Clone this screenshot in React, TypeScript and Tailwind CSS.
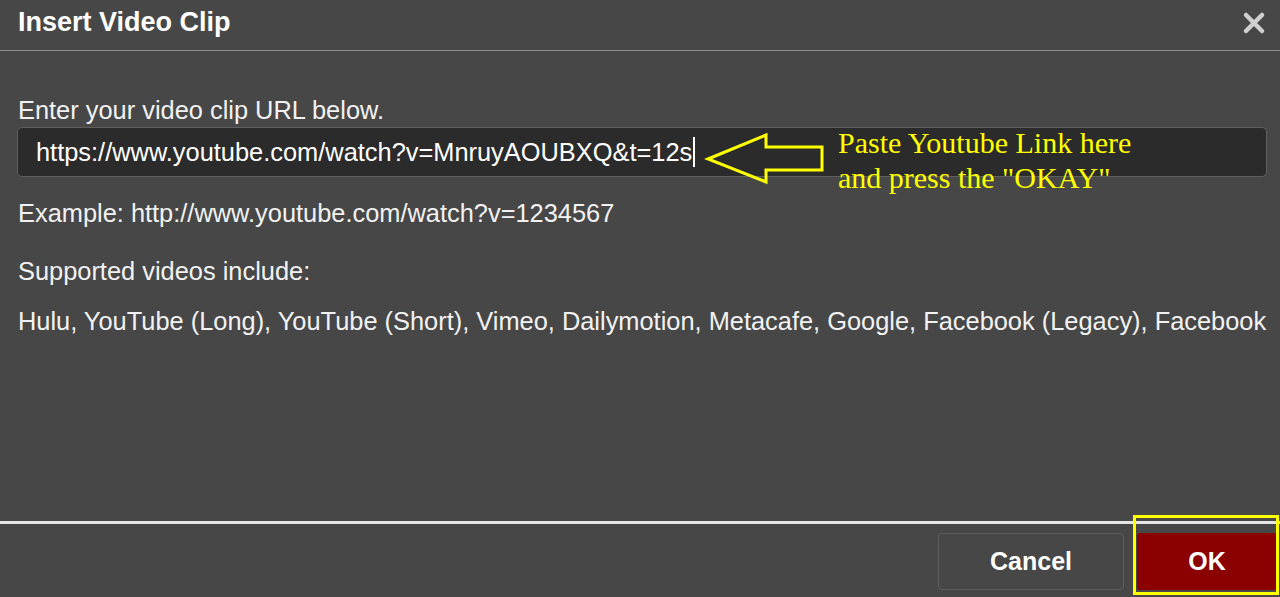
import React from 'react';

const App: React.FC = () => {
  return (
    <div className="relative w-[1280px] h-[597px] overflow-hidden bg-[#474747] text-white flex flex-col font-['Liberation_Sans',Arial,sans-serif]">
      {/* header */}
      <div className="h-[51px] shrink-0 flex items-center justify-between pl-[18px] pr-[12px] border-b border-[#8f8f8f]">
        <h1 className="text-[27px] font-bold leading-none text-white -mt-[6px]">Insert Video Clip</h1>
        <button className="w-[28px] h-[28px] flex items-center justify-center -mt-[4px]">
          <svg width="24" height="24" viewBox="0 0 24 24">
            <path d="M4 4 L20 20 M20 4 L4 20" stroke="#cfcfcf" strokeWidth="4.5" strokeLinecap="round" />
          </svg>
        </button>
      </div>

      {/* body */}
      <div className="flex-1 pl-[17px] pr-[13px] pt-[45px] text-[25.4px] leading-[28px] text-[#f2f2f2]">
        <p className="pl-[1px]">Enter your video clip URL below.</p>
        <div className="mt-[3px] h-[50px] rounded-[5px] border border-[#5f5f5f] bg-[#2b2b2b] flex items-center pl-[18px]">
          <span className="text-white">https://www.youtube.com/watch?v=MnruyAOUBXQ&amp;t=12s</span>
          <span className="ml-[1px] w-[2px] h-[30px] bg-white" />
        </div>
        <p className="mt-[22px] pl-[1px]">Example: http://www.youtube.com/watch?v=1234567</p>
        <p className="mt-[30px] pl-[1px]">Supported videos include:</p>
        <p className="mt-[22px] pl-[1px] whitespace-nowrap">
          Hulu, YouTube (Long), YouTube (Short), Vimeo, Dailymotion, Metacafe, Google, Facebook (Legacy), Facebook
        </p>
      </div>

      {/* footer */}
      <div className="h-[76px] shrink-0 border-t-[3px] border-[#e6e6e6] flex items-start justify-end pt-[9px] pr-[3px] gap-[13px]">
        <button className="w-[186px] h-[57px] rounded-[4px] border border-[#5e5e5e] bg-[#474747] text-[25px] font-bold text-white">
          Cancel
        </button>
        <button className="w-[140px] h-[57px] rounded-[3px] bg-[#8b0000] text-[25px] font-bold text-white">
          OK
        </button>
      </div>

      {/* annotation overlays */}
      <svg className="absolute left-[700px] top-[128px]" width="130" height="60" viewBox="700 128 130 60">
        <path
          d="M708 159 L766 135 L766 147 L822 147 L822 170 L766 170 L766 182 Z"
          fill="none"
          stroke="#ffff00"
          strokeWidth="3"
          strokeLinejoin="miter"
        />
      </svg>
      <div className="absolute left-[838px] top-[125px] text-[30px] leading-[35px] text-[#ffff00] font-['Liberation_Serif','Times_New_Roman',serif]">
        <div>Paste Youtube Link here</div>
        <div>and press the "OKAY"</div>
      </div>
      <div className="absolute left-[1133px] top-[515px] w-[146px] h-[80px] border-[3px] border-[#ffff00]" />
    </div>
  );
};

export default App;
